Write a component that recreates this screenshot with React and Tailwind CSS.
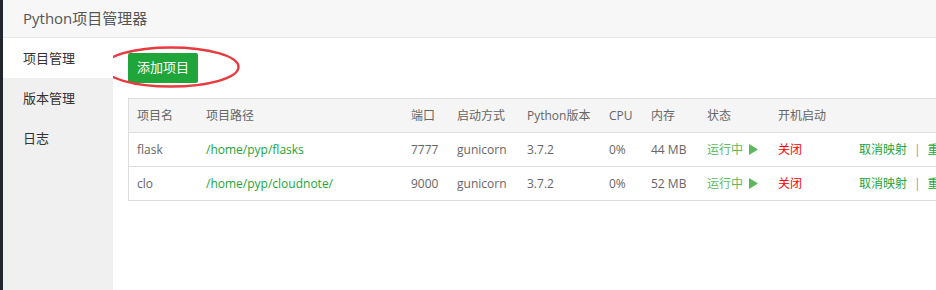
import React from "react";

const font = { fontFamily: '"Open Sans", "Noto Sans CJK SC", sans-serif' };

const rows = [
  { name: "flask", path: "/home/pyp/flasks", port: "7777", mem: "44 MB" },
  { name: "clo", path: "/home/pyp/cloudnote/", port: "9000", mem: "52 MB" },
];

const cols = ["项目名", "项目路径", "端口", "启动方式", "Python版本", "CPU", "内存", "状态", "开机启动", ""];
const widths = ["w-[69px]", "w-[205px]", "w-[46px]", "w-[70px]", "w-[82px]", "w-[42px]", "w-[56px]", "w-[71px]", "w-[81px]", "w-[180px]"];

export default function App() {
  return (
    <div className="flex h-[290px] w-[936px] overflow-hidden bg-white text-[#333]" style={font}>
      <div className="w-[3px] shrink-0 bg-[#23262e]" />
      <div className="flex min-w-0 flex-1 flex-col">
        <div className="flex h-[38px] shrink-0 items-center border-b border-[#e8e8e8] bg-[#f7f7f7] pl-[20px] text-[15px] text-[#555]">
          Python项目管理器
        </div>
        <div className="flex min-h-0 flex-1">
          <div className="flex w-[110px] shrink-0 flex-col bg-[#f0f0f0] text-[13px] text-[#333]">
            <div className="flex h-[40px] items-center bg-white pl-[20px] pt-[1px]">项目管理</div>
            <div className="flex h-[40px] items-center pl-[20px] pt-[1px]">版本管理</div>
            <div className="flex h-[40px] items-center pl-[20px] pt-[1px]">日志</div>
          </div>
          <div className="min-w-0 flex-1 overflow-hidden pl-[15px] pt-[15px]">
            <div className="relative inline-block">
              <button className="h-[30px] w-[70px] rounded-[2px] bg-[#20a53a] text-[13px] text-white">添加项目</button>
              <svg className="absolute left-[-27px] top-[-9px] pointer-events-none" width="140" height="46" viewBox="0 0 140 46">
                <ellipse cx="70" cy="23" rx="67.5" ry="19.5" fill="none" stroke="#e93a3f" strokeWidth="2.4" />
              </svg>
            </div>
            <div className="mt-[15px] w-[900px] border border-[#ddd]">
              <table className="w-full table-fixed border-collapse text-[12px]">
                <thead>
                  <tr className="h-[33px] bg-[#f5f5f5] text-[#666]">
                    {cols.map((c, i) => (
                      <th key={i} className={`${widths[i]} pl-[8px] pt-[1px] text-left font-normal`}>{c}</th>
                    ))}
                  </tr>
                </thead>
                <tbody className="text-[#666]">
                  {rows.map((r) => (
                    <tr key={r.name} className="h-[34px] border-t border-[#ddd] [&>td]:pt-[1px]">
                      <td className="pl-[8px]">{r.name}</td>
                      <td className="pl-[8px] text-[#20a53a]">{r.path}</td>
                      <td className="pl-[8px]">{r.port}</td>
                      <td className="pl-[8px]">gunicorn</td>
                      <td className="pl-[8px]">3.7.2</td>
                      <td className="pl-[8px]">0%</td>
                      <td className="pl-[8px]">{r.mem}</td>
                      <td className="pl-[8px] text-[#5cb85c]">
                        <span className="inline-flex items-center gap-[6px]">
                          运行中
                          <svg width="9" height="11" viewBox="0 0 9 11"><path d="M0 0 L9 5.5 L0 11 Z" fill="#5cb85c" /></svg>
                        </span>
                      </td>
                      <td className="pl-[8px] text-[#ff0000]">关闭</td>
                      <td className="pl-[8px] whitespace-nowrap">
                        <span className="text-[#20a53a]">取消映射</span>
                        <span className="mx-[7px] text-[#999]">|</span>
                        <span className="text-[#20a53a]">重启</span>
                      </td>
                    </tr>
                  ))}
                </tbody>
              </table>
            </div>
          </div>
        </div>
      </div>
    </div>
  );
}
